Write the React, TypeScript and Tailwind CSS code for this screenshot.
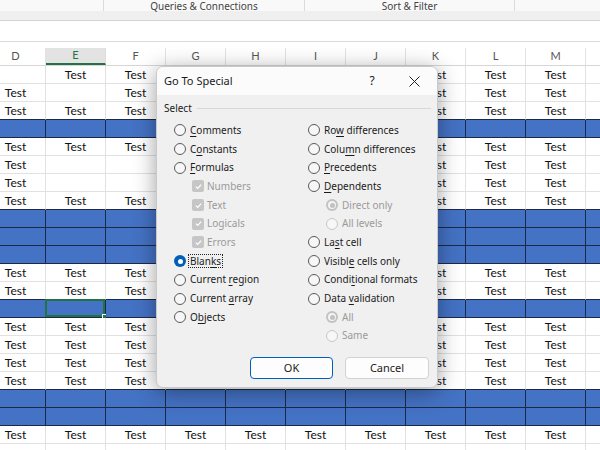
import React from "react";

const COLS = ["D", "E", "F", "G", "H", "I", "J", "K", "L", "M", "N"];
const BLUE = new Set([3, 8, 9, 10, 13, 18, 19]);
const ROWS = Array.from({ length: 22 }, (_, i) => i);

function cellText(r: number, c: number) {
  if (BLUE.has(r) || c === 10 || r === 21) return "";
  if (r === 0 && c === 0) return "";
  if (r === 1 && c === 1) return "";
  if ((r === 5 || r === 6) && (c === 1 || c === 2)) return "";
  return "Test";
}

/** 带下划线访问键的标签 */
function Label(props: { text: string; k?: number }) {
  const { text, k } = props;
  if (k === undefined) return <>{text}</>;
  return (
    <>
      {text.slice(0, k)}
      <span className="underline underline-offset-2">{text[k]}</span>
      {text.slice(k + 1)}
    </>
  );
}

type Item = {
  text: string;
  k?: number;
  kind: "radio" | "check" | "sub";
  checked?: boolean;
  focus?: boolean;
};

const LEFT: Item[] = [
  { text: "Comments", k: 0, kind: "radio" },
  { text: "Constants", k: 1, kind: "radio" },
  { text: "Formulas", k: 0, kind: "radio" },
  { text: "Numbers", kind: "check" },
  { text: "Text", kind: "check" },
  { text: "Logicals", kind: "check" },
  { text: "Errors", kind: "check" },
  { text: "Blanks", k: 4, kind: "radio", checked: true, focus: true },
  { text: "Current region", k: 8, kind: "radio" },
  { text: "Current array", k: 8, kind: "radio" },
  { text: "Objects", k: 1, kind: "radio" },
];

const RIGHT: Item[] = [
  { text: "Row differences", k: 2, kind: "radio" },
  { text: "Column differences", k: 4, kind: "radio" },
  { text: "Precedents", k: 0, kind: "radio" },
  { text: "Dependents", k: 0, kind: "radio" },
  { text: "Direct only", kind: "sub", checked: true },
  { text: "All levels", kind: "sub" },
  { text: "Last cell", k: 2, kind: "radio" },
  { text: "Visible cells only", k: 6, kind: "radio" },
  { text: "Conditional formats", k: 5, kind: "radio" },
  { text: "Data validation", k: 5, kind: "radio" },
  { text: "All", kind: "sub", checked: true },
  { text: "Same", kind: "sub" },
];

function Mark({ item }: { item: Item }) {
  if (item.kind === "check") {
    return (
      <span className="flex h-[12px] w-[12px] items-center justify-center rounded-[2px] bg-[#c6c6c6]">
        <svg width="9" height="9" viewBox="0 0 10 10" fill="none">
          <path d="M2 5.2 L4.1 7.2 L8 2.8" stroke="#fff" strokeWidth="1.3" />
        </svg>
      </span>
    );
  }
  if (item.kind === "sub") {
    return item.checked ? (
      <span className="flex h-[12px] w-[12px] items-center justify-center rounded-full bg-[#c2c2c2]">
        <span className="flex h-[8px] w-[8px] items-center justify-center rounded-full bg-[#f4f4f4]">
          <span className="h-[5px] w-[5px] rounded-full bg-[#c2c2c2]" />
        </span>
      </span>
    ) : (
      <span className="block h-[12px] w-[12px] rounded-full border border-[#c8c8c8] bg-[#f7f7f7]" />
    );
  }
  return item.checked ? (
    <span className="flex h-[12px] w-[12px] items-center justify-center rounded-full bg-[#005fb8]">
      <span className="h-[5px] w-[5px] rounded-full bg-white" />
    </span>
  ) : (
    <span className="block h-[12px] w-[12px] rounded-full border border-[#5a5a5a] bg-[#f7f7f7]" />
  );
}

function Option({ item }: { item: Item }) {
  const indent = item.kind !== "radio";
  return (
    <div
      className={
        indent
          ? "flex h-[18.7px] items-center pl-[18px] text-[#9a9a9a]"
          : "flex h-[18.7px] items-center text-[#1b1b1b]"
      }
    >
      <span className={item.kind === "check" ? "w-[15px] shrink-0" : "w-[16px] shrink-0"}>
        <Mark item={item} />
      </span>
      <span
        className={
          item.focus
            ? "-ml-[2px] whitespace-nowrap border border-dotted border-[#222] px-[1px] leading-[12px]"
            : "whitespace-nowrap"
        }
      >
        <Label text={item.text} k={item.k} />
      </span>
    </div>
  );
}

function Dialog() {
  return (
    <div className="absolute left-[156px] top-[66px] flex h-[322px] w-[282px] flex-col overflow-hidden rounded-[7px] border border-[#c9c9c9] bg-[#f0f0f0] text-[10px] shadow-[0_4px_22px_rgba(0,0,0,0.38)] [font-family:'Noto_Sans','Open_Sans',sans-serif]">
      <div className="flex h-[28px] shrink-0 items-center bg-[#fbfbfb] pl-[7px]">
        <span className="flex-1 text-[11px] text-[#1a1a1a]">Go To Special</span>
        <span className="w-[38px] text-center text-[12px] text-[#222]">?</span>
        <span className="flex w-[46px] justify-center">
          <svg width="11" height="11" viewBox="0 0 11 11">
            <path d="M0.5 0.5 L10.5 10.5 M10.5 0.5 L0.5 10.5" stroke="#222" strokeWidth="1" />
          </svg>
        </span>
      </div>
      <div className="flex h-[26px] shrink-0 items-center gap-[5px] pl-[7px] pr-[6px] text-[#1b1b1b]">
        <span>Select</span>
        <div className="h-px flex-1 bg-[#d7d7d7]" />
      </div>
      <div className="flex">
        <div className="w-[151px] shrink-0 pl-[17px]">
          {LEFT.map((it) => (
            <Option key={it.text} item={it} />
          ))}
        </div>
        <div className="flex-1">
          {RIGHT.map((it) => (
            <Option key={it.text} item={it} />
          ))}
        </div>
      </div>
      <div className="mt-auto flex justify-end gap-[12px] pb-[8px] pr-[8px] text-[11px] text-[#1b1b1b]">
        <button className="flex h-[22px] w-[83px] items-center justify-center rounded-[4px] border border-[#005fb8] bg-[#fdfdfd]">
          OK
        </button>
        <button className="flex h-[22px] w-[84px] items-center justify-center rounded-[4px] border border-[#d2d2d2] bg-[#fdfdfd]">
          Cancel
        </button>
      </div>
    </div>
  );
}

export default function App() {
  return (
    <div className="relative h-[450px] w-[600px] overflow-hidden bg-white [font-family:'Lato','Liberation_Sans',sans-serif]">
      {/* ribbon 底部分组标签 */}
      <div className="flex h-[11px] items-center bg-[#f9f9f9] text-[10px] leading-none text-[#444] [font-family:'Noto_Sans','Open_Sans',sans-serif]">
        <div className="h-full w-[104px] border-r border-[#dcdcdc]" />
        <div className="flex h-full w-[201px] items-center justify-center border-r border-[#dcdcdc]">
          Queries &amp; Connections
        </div>
        <div className="flex h-full w-[210px] items-center justify-center border-r border-[#dcdcdc]">
          Sort &amp; Filter
        </div>
      </div>
      <div className="h-[10px] border-b border-[#d3d3d3] bg-[#efefef]" />
      <div className="h-[21px] border-b border-[#dadada] bg-white" />
      <div className="h-[6px]" />
      {/* 列标题 */}
      <div className="ml-[-14px] flex h-[18px] border-b border-[#d6d6d6] text-[11px] text-[#555]">
        {COLS.map((c) => (
          <div
            key={c}
            className={
              c === "E"
                ? "flex w-[60px] shrink-0 items-center justify-center border-b-2 border-r border-b-[#217346] border-r-[#dcdcdc] bg-[#e3e3e3] text-[#217346]"
                : "flex w-[60px] shrink-0 items-center justify-center border-r border-[#e3e3e3]"
            }
          >
            {c === "N" ? "" : c}
          </div>
        ))}
      </div>
      {/* 单元格 */}
      <div className="ml-[-14px] text-[12px] text-[#111]">
        {ROWS.map((r) => {
          const blue = BLUE.has(r);
          const nextBlue = BLUE.has(r + 1);
          return (
            <div key={r} className="flex h-[18px]">
              {COLS.map((c, ci) => {
                const sel = r === 13 && c === "E";
                let cls = "relative flex w-[60px] shrink-0 items-center justify-center border-b border-r ";
                if (blue) cls += "bg-[#4472c4] border-[#1c2a48]";
                else if (nextBlue) cls += "border-r-[#e1e1e1] border-b-[#1c2a48]";
                else cls += "border-[#e1e1e1]";
                return (
                  <div key={c} className={cls}>
                    {cellText(r, ci)}
                    {sel && (
                      <>
                        <div className="absolute -left-px -top-px bottom-0 right-0 border-2 border-[#217346]" />
                        <div className="absolute -bottom-[2px] -right-[2px] h-[5px] w-[5px] border border-white bg-[#217346]" />
                      </>
                    )}
                  </div>
                );
              })}
            </div>
          );
        })}
      </div>
      <Dialog />
    </div>
  );
}
